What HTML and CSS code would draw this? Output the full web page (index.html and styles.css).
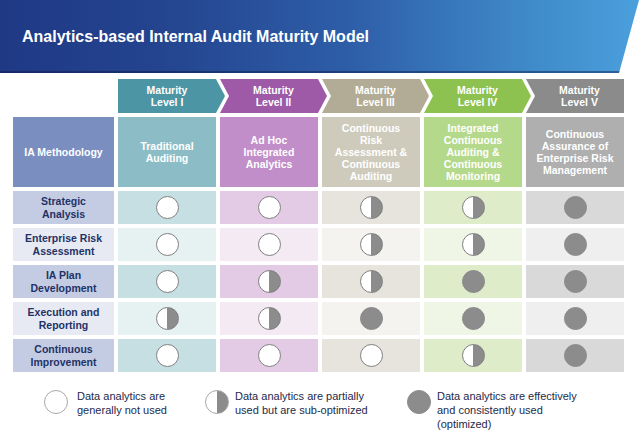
FILE: index.html
```html
<!DOCTYPE html>
<html>
<head>
<meta charset="utf-8">
<link rel="stylesheet" href="styles.css">
</head>
<body>
<header class="banner">
  <h1 class="title">Analytics-based Internal Audit Maturity Model</h1>
</header>

<main class="matrix">
  <div class="corner"></div>
  <div class="lvl lvl1 first"><span>Maturity<br>Level I</span></div>
  <div class="lvl lvl2"><span>Maturity<br>Level II</span></div>
  <div class="lvl lvl3"><span>Maturity<br>Level III</span></div>
  <div class="lvl lvl4"><span>Maturity<br>Level IV</span></div>
  <div class="lvl lvl5 last"><span>Maturity<br>Level V</span></div>

  <div class="head label-head">IA Methodology</div>
  <div class="head c1-head">Traditional<br>Auditing</div>
  <div class="head c2-head">Ad Hoc<br>Integrated<br>Analytics</div>
  <div class="head c3-head">Continuous<br>Risk<br>Assessment &amp;<br>Continuous<br>Auditing</div>
  <div class="head c4-head">Integrated<br>Continuous<br>Auditing &amp;<br>Continuous<br>Monitoring</div>
  <div class="head c5-head">Continuous<br>Assurance of<br>Enterprise Risk<br>Management</div>

  <div class="lab dark">Strategic<br>Analysis</div>
  <div class="cell c1 dark"><i class="dot empty"></i></div>
  <div class="cell c2 dark"><i class="dot empty"></i></div>
  <div class="cell c3 dark"><i class="dot half"></i></div>
  <div class="cell c4 dark"><i class="dot half"></i></div>
  <div class="cell c5 dark"><i class="dot full"></i></div>

  <div class="lab light">Enterprise Risk<br>Assessment</div>
  <div class="cell c1 light"><i class="dot empty"></i></div>
  <div class="cell c2 light"><i class="dot empty"></i></div>
  <div class="cell c3 light"><i class="dot half"></i></div>
  <div class="cell c4 light"><i class="dot half"></i></div>
  <div class="cell c5 light"><i class="dot full"></i></div>

  <div class="lab dark">IA Plan<br>Development</div>
  <div class="cell c1 dark"><i class="dot empty"></i></div>
  <div class="cell c2 dark"><i class="dot half"></i></div>
  <div class="cell c3 dark"><i class="dot half"></i></div>
  <div class="cell c4 dark"><i class="dot full"></i></div>
  <div class="cell c5 dark"><i class="dot full"></i></div>

  <div class="lab light">Execution and<br>Reporting</div>
  <div class="cell c1 light"><i class="dot half"></i></div>
  <div class="cell c2 light"><i class="dot half"></i></div>
  <div class="cell c3 light"><i class="dot full"></i></div>
  <div class="cell c4 light"><i class="dot full"></i></div>
  <div class="cell c5 light"><i class="dot full"></i></div>

  <div class="lab dark">Continuous<br>Improvement</div>
  <div class="cell c1 dark"><i class="dot empty"></i></div>
  <div class="cell c2 dark"><i class="dot empty"></i></div>
  <div class="cell c3 dark"><i class="dot empty"></i></div>
  <div class="cell c4 dark"><i class="dot half"></i></div>
  <div class="cell c5 dark"><i class="dot full"></i></div>
</main>

<footer class="legend">
  <div class="key key1"><i class="ldot empty"></i><p>Data analytics are<br>generally not used</p></div>
  <div class="key key2"><i class="ldot half"></i><p>Data analytics are partially<br>used but are sub-optimized</p></div>
  <div class="key key3"><i class="ldot full"></i><p>Data analytics are effectively<br>and consistently used<br>(optimized)</p></div>
</footer>
</body>
</html>
```

FILE: styles.css
```css
* { box-sizing: border-box; }
html, body { margin: 0; padding: 0; background: #fff; }
body {
  width: 639px;
  height: 438px;
  overflow: hidden;
  font-family: "Liberation Sans", Arial, sans-serif;
}

.banner {
  height: 73px;
  background: linear-gradient(90deg, #1f3985 0%, #24448f 25%, #2e5ea8 55%, #3e86c6 80%, #4aa0dc 100%);
  clip-path: polygon(0 0, 100% 0, calc(100% - 20px) 100%, 0 100%);
  padding: 28px 0 0 22px;
  box-shadow: inset 0 -2px 0 rgba(10, 25, 70, 0.45);
}
.title {
  margin: 0;
  color: #fff;
  font-size: 16px;
  line-height: 18px;
  font-weight: bold;
}

.matrix {
  display: grid;
  grid-template-columns: 101px repeat(5, 98px);
  grid-template-rows: 34px 70px repeat(5, 33px);
  column-gap: 4px;
  row-gap: 4px;
  margin: 6px 0 0 13px;
  font-weight: bold;
  font-size: 10.5px;
  line-height: 12px;
}

.lvl {
  color: #fff;
  display: flex;
  align-items: center;
  justify-content: center;
  text-align: center;
  margin-right: -9px;
  padding: 0 9px;
  clip-path: polygon(0 0, calc(100% - 9px) 0, 100% 50%, calc(100% - 9px) 100%, 0 100%, 9px 50%);
}
.lvl.first {
  clip-path: polygon(0 0, calc(100% - 9px) 0, 100% 50%, calc(100% - 9px) 100%, 0 100%);
  padding-left: 0;
}
.lvl.last {
  margin-right: 0;
  padding-right: 0;
  clip-path: polygon(0 0, 100% 0, 100% 100%, 0 100%, 9px 50%);
}
.lvl1 { background: #4c95a4; }
.lvl2 { background: #9e59a7; }
.lvl3 { background: #b2ac96; }
.lvl4 { background: #8ec250; }
.lvl5 { background: #8b8b8b; }

.head {
  color: #fff;
  display: flex;
  align-items: center;
  justify-content: center;
  text-align: center;
}
.label-head { background: #7a8ebf; }
.c1-head { background: #8cbdc6; }
.c2-head { background: #c18ec9; }
.c3-head { background: #cfcbbc; }
.c4-head { background: #b5d98b; }
.c5-head { background: #afafaf; }

.lab {
  color: #1f3266;
  display: flex;
  align-items: center;
  justify-content: center;
  text-align: center;
  line-height: 12.5px;
}
.lab.dark { background: #c4cce3; }
.lab.light { background: #e8eaf3; }

.cell {
  display: flex;
  align-items: center;
  justify-content: center;
}
.c1.dark { background: #c5dfe3; }
.c1.light { background: #e6f1f2; }
.c2.dark { background: #e3cbe6; }
.c2.light { background: #f3eaf4; }
.c3.dark { background: #e6e4dc; }
.c3.light { background: #f4f3ef; }
.c4.dark { background: #dfecc9; }
.c4.light { background: #eff6e6; }
.c5.dark { background: #d9d9d9; }
.c5.light { background: #efefef; }

.dot, .ldot {
  display: block;
  width: 23px;
  height: 23px;
  border-radius: 50%;
  border: 1px solid #7f7f7f;
  background: #fff;
}
.dot.half, .ldot.half {
  background: linear-gradient(90deg, #fff 50%, #8c8c8c 50%);
}
.dot.full, .ldot.full {
  background: #8c8c8c;
  border-color: #8c8c8c;
}

.legend {
  display: flex;
  align-items: flex-start;
  margin-top: 17px;
  padding-left: 44px;
  font-size: 11px;
  line-height: 14px;
  color: #1e2a4a;
}
.key {
  display: flex;
  align-items: flex-start;
}
.key1 { width: 161px; }
.key2 { width: 202px; }
.ldot {
  width: 24px;
  height: 24px;
  margin-top: 1px;
  margin-right: 9px;
  border-color: #a8a8a8;
  flex: none;
}
.key2 .ldot { margin-right: 6px; }
.key3 .ldot { margin-right: 6px; }
.key p { margin: 0; }
```
